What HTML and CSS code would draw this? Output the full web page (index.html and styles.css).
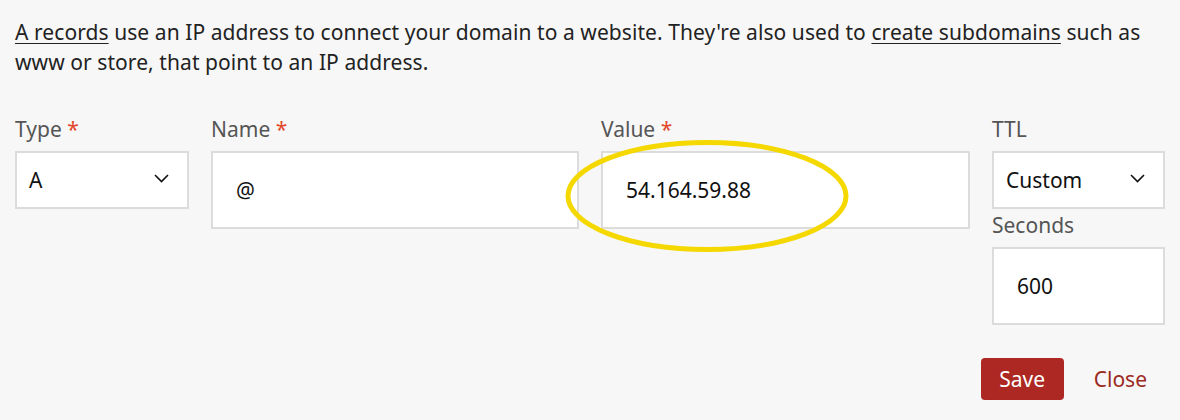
FILE: index.html
```html
<!DOCTYPE html>
<html>
<head>
<meta charset="utf-8">
<link rel="stylesheet" href="styles.css">
</head>
<body>
<div class="panel">
  <p class="intro"><a href="#">A records</a> use an IP address to connect your domain to a website. They're also used to <a href="#">create subdomains</a> such as www or store, that point to an IP address.</p>
  <div class="row">
    <div class="field f-type">
      <label class="lbl">Type <span class="req">*</span></label>
      <div class="box select"><span>A</span><svg class="chev" width="15" height="9" viewBox="0 0 15 9"><path d="M1 1l6.5 6.5 6.5-6.5" fill="none" stroke="#111" stroke-width="1.6"/></svg></div>
    </div>
    <div class="field f-name">
      <label class="lbl">Name <span class="req">*</span></label>
      <div class="box input"><span>@</span></div>
    </div>
    <div class="field f-value">
      <label class="lbl">Value <span class="req">*</span></label>
      <div class="box input"><span>54.164.59.88</span></div>
      <svg class="ring" width="300" height="124" viewBox="0 0 300 124"><ellipse cx="150" cy="62" rx="139" ry="53.5" fill="none" stroke="#f4d800" stroke-width="5"/></svg>
    </div>
    <div class="field f-ttl">
      <label class="lbl">TTL</label>
      <div class="box select"><span>Custom</span><svg class="chev" width="15" height="9" viewBox="0 0 15 9"><path d="M1 1l6.5 6.5 6.5-6.5" fill="none" stroke="#111" stroke-width="1.6"/></svg></div>
      <label class="lbl sec">Seconds</label>
      <div class="box input"><span>600</span></div>
    </div>
  </div>
  <div class="actions">
    <button class="save">Save</button>
    <a class="close" href="#">Close</a>
  </div>
</div>
</body>
</html>
```
FILE: styles.css
```css
html, body {
  margin: 0;
  padding: 0;
  background: #f7f7f7;
}
body {
  font-family: "Noto Sans", "Open Sans", sans-serif;
  color: #222;
  width: 1180px;
  height: 420px;
  overflow: hidden;
}
.panel {
  padding: 17px 15px 0 15px;
}
.intro {
  margin: 0;
  font-size: 21px;
  letter-spacing: 0.07px;
  line-height: 30px;
  color: #222;
}
.intro a {
  color: #222;
  text-decoration: underline;
  text-underline-offset: 3px;
  text-decoration-thickness: 1px;
}
.row {
  display: flex;
  gap: 22px;
  margin-top: 39px;
}
.field {
  display: flex;
  flex-direction: column;
  position: relative;
}
.f-type { width: 174px; }
.f-name { width: 368px; }
.f-value { width: 369px; }
.f-ttl { width: 173px; }
.lbl {
  font-size: 21px;
  line-height: 26px;
  color: #555;
  margin-bottom: 9px;
}
.lbl.sec {
  margin-top: 3px;
  margin-bottom: 9px;
}
.req {
  color: #e2472a;
}
.box {
  box-sizing: border-box;
  background: #fff;
  border: 2px solid #dcdcdc;
  font-size: 21px;
  color: #111;
  display: flex;
  align-items: center;
}
.select {
  height: 58px;
  padding: 0 18px 0 12px;
  justify-content: space-between;
}
.input {
  height: 78px;
  padding-left: 23px;
}
.chev {
  margin-top: -4px;
}
.ring {
  position: absolute;
  left: -44px;
  top: 18px;
  pointer-events: none;
}
.actions {
  display: flex;
  justify-content: flex-end;
  align-items: center;
  gap: 30px;
  margin-top: 33px;
  padding-right: 18px;
}
.save {
  width: 83px;
  height: 42px;
  border: none;
  border-radius: 4px;
  background: #ad2823;
  color: #fff;
  font-family: "Noto Sans", "Open Sans", sans-serif;
  font-size: 21px;
  padding: 0;
}
.close {
  color: #9b2a23;
  font-size: 21px;
  text-decoration: none;
}
```
